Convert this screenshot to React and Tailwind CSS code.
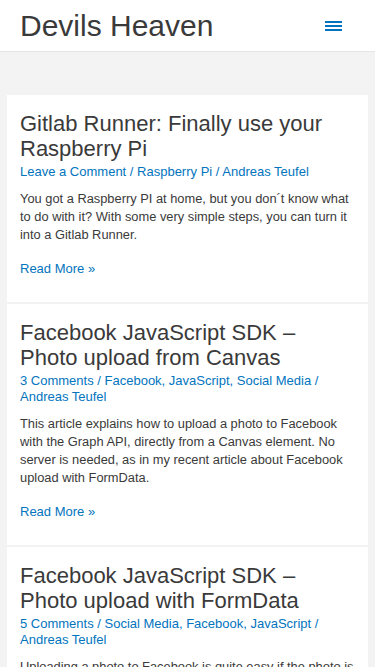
const posts = [
  {
    title: 'Gitlab Runner: Finally use your Raspberry Pi',
    meta: ['Leave a Comment', 'Raspberry Pi', 'Andreas Teufel'],
    excerpt:
      'You got a Raspberry PI at home, but you don´t know what to do with it? With some very simple steps, you can turn it into a Gitlab Runner.',
  },
  {
    title: 'Facebook JavaScript SDK – Photo upload from Canvas',
    meta: ['3 Comments', 'Facebook, JavaScript, Social Media', 'Andreas Teufel'],
    excerpt:
      'This article explains how to upload a photo to Facebook with the Graph API, directly from a Canvas element. No server is needed, as in my recent article about Facebook upload with FormData.',
  },
  {
    title: 'Facebook JavaScript SDK – Photo upload with FormData',
    meta: ['5 Comments', 'Social Media, Facebook, JavaScript', 'Andreas Teufel'],
    excerpt:
      'Uploading a photo to Facebook is quite easy if the photo is stored on your server, but it gets tricky if you want to upload it directly.',
  },
]

function Post({ post }) {
  return (
    <article className="bg-white px-[13px] pt-[17px] pb-[24px]">
      <h2 className="text-[22px] leading-[24.5px] text-[#3a3a3a]">{post.title}</h2>
      <p className="mt-[3px] text-[13px] leading-[16px] text-[#0274be]">
        {post.meta.join(' / ')}
      </p>
      <p className="mt-[10px] text-[12.85px] leading-[18px] text-[#3a3a3a]">{post.excerpt}</p>
      <a className="mt-[16px] block text-[13px] leading-[18px] text-[#0274be]">Read More »</a>
    </article>
  )
}

export default function App() {
  return (
    <div className="min-h-[667px] bg-[#f3f3f3] font-['Liberation_Sans',Arial,sans-serif]">
      <header className="flex h-[52px] items-center justify-between border-b border-[#e5e5e5] bg-white pl-5 pr-[33px]">
        <h1 className="text-[30px] leading-none text-[#3a3a3a]">Devils Heaven</h1>
        <button className="flex w-[17px] flex-col gap-[2px]">
          <span className="h-[2px] bg-[#0274be]" />
          <span className="h-[2px] bg-[#0274be]" />
          <span className="h-[2px] bg-[#0274be]" />
        </button>
      </header>
      <main className="flex flex-col gap-[2px] px-[7px] pt-[43px]">
        {posts.map((p) => (
          <Post key={p.title} post={p} />
        ))}
      </main>
    </div>
  )
}
